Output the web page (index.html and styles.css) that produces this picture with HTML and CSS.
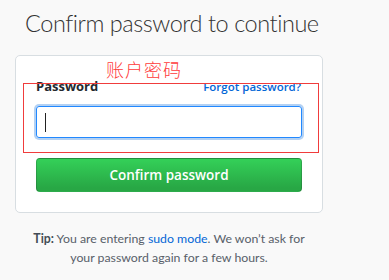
FILE: index.html
```html
<!DOCTYPE html>
<html lang="en">
<head>
    <meta charset="UTF-8">
    <meta name="viewport" content="width=device-width, initial-scale=1.0">
    <title>Confirm password</title>
    <link rel="stylesheet" href="styles.css">
</head>
<body>

<div class="page">
    <h1 class="title">Confirm password to continue</h1>

    <div class="card">
        <div class="note-text">账户密码</div>
        <div class="note-box"></div>

        <div class="label-row">
            <label class="label">Password</label>
            <a class="forgot" href="#">Forgot password?</a>
        </div>
        <div class="field"><span class="caret"></span></div>
        <button class="confirm-button">Confirm password</button>
    </div>

    <p class="tip"><strong>Tip:</strong> You are entering <a href="#">sudo mode</a>. We won’t ask for your password again for a few hours.</p>
</div>

</body>
</html>
```

FILE: styles.css
```css
body {
    margin: 0;
    padding: 0;
    background-color: #f9f9f9;
    font-family: "Open Sans", "Liberation Sans", sans-serif;
    color: #24292e;
}
.page {
    width: 389px;
    padding-top: 6px;
}
.title {
    margin: 0 0 14px 25px;
    font-family: Lato, "Open Sans", sans-serif;
    font-size: 23.5px;
    font-weight: 300;
    line-height: 35px;
    letter-spacing: -0.45px;
    color: #333;
}
.card {
    position: relative; /* 注釈の基準 */
    margin-left: 15px;
    width: 266px;
    padding: 20px;
    background-color: #fff;
    border: 1px solid #d8dee2;
    border-radius: 5px;
}
.note-text {
    position: absolute;
    left: 90px;
    top: 1px;
    font-family: "Noto Sans CJK SC", sans-serif;
    font-size: 18px;
    font-weight: 300;
    line-height: 24px;
    color: #ff3b3b;
    letter-spacing: 1px;
}
.note-box {
    position: absolute;
    left: 7px;
    top: 27px;
    width: 294px;
    height: 68px;
    border: 1px solid #f03c3c;
}
.label-row {
    display: flex;
    justify-content: space-between;
    align-items: baseline;
    height: 30px;
}
.label {
    font-size: 13px;
    font-weight: 700;
    line-height: 21px;
}
.forgot {
    font-size: 11.5px;
    font-weight: 600;
    color: #0366d6;
    text-decoration: none;
    margin-right: 1px;
}
.field {
    height: 30px;
    border: 1px solid #2188ff;
    border-radius: 3px;
    box-shadow: 0 0 0 2px rgba(3, 102, 214, 0.3);
    display: flex;
    align-items: center;
    padding-left: 8px;
}
.caret {
    width: 1px;
    height: 19px;
    background-color: #222;
}
.confirm-button {
    display: block;
    width: 100%;
    height: 34px;
    margin-top: 20px;
    background-image: linear-gradient(-180deg, #34d058 0%, #28a745 90%);
    border: 1px solid rgba(27, 31, 35, 0.2);
    border-radius: 4px;
    color: #fff;
    font-family: "Open Sans", "Liberation Sans", sans-serif;
    font-size: 13.5px;
    font-weight: 600;
    cursor: pointer;
}
.tip {
    width: 278px;
    margin: 16px 0 0 30px;
    text-align: center;
    font-family: Lato, "Open Sans", sans-serif;
    font-size: 12.3px;
    line-height: 19px;
    color: #586069;
}
.tip strong {
    font-weight: 700;
    color: #444d56;
}
.tip a {
    color: #0366d6;
    text-decoration: none;
}
```
